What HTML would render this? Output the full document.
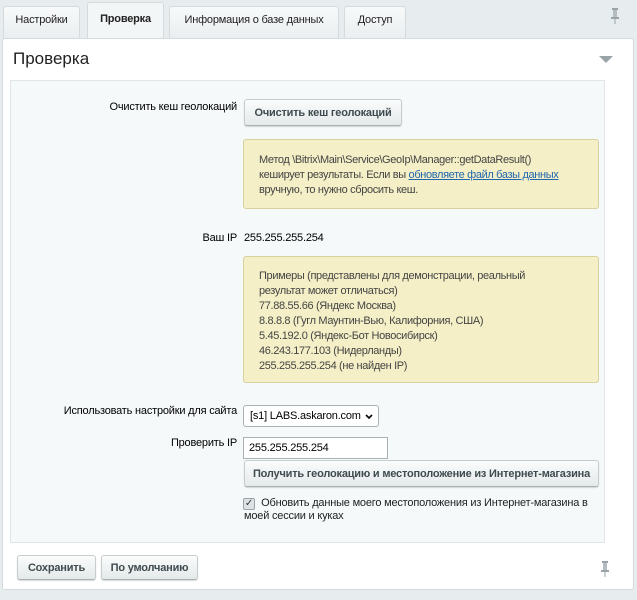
<!DOCTYPE html>
<html><head><meta charset="utf-8"><style>
*{margin:0;padding:0;box-sizing:border-box}
body{width:637px;height:600px;background:#e7ecee;font-family:"Liberation Sans",Arial,sans-serif;font-size:11px;color:#000;position:relative;overflow:hidden;letter-spacing:-0.2px}
.a{position:absolute;white-space:nowrap}
.tab{position:absolute;top:6px;height:33px;background:linear-gradient(#f8fafa,#e9eef0);border:1px solid #d5dbdd;border-bottom:none;border-radius:3px 3px 0 0;font-size:11px;color:#222;text-align:center;line-height:26px}
.btn{position:absolute;background:linear-gradient(#fbfcfc,#e4e9ea);border:1px solid #c6cdcf;border-bottom-color:#a9b1b3;border-radius:3px;font-weight:bold;color:#3f4b4e;text-align:center;box-shadow:0 1px 1px rgba(0,0,0,.15);font-size:11px}
.note{position:absolute;background:#f4efc6;border:1px solid #d8d09d;border-radius:3px;color:#444;line-height:15px;font-size:11px;padding:12px 0 0 15px;letter-spacing:-0.35px}
</style></head><body>
<div class="tab" style="left:3px;width:77px">Настройки</div>
<div class="tab" style="left:87px;width:77px;top:2px;height:38px;background:#f3f6f7;font-weight:bold;line-height:32px">Проверка</div>
<div class="tab" style="left:169px;width:170px">Информация о базе данных</div>
<div class="tab" style="left:344px;width:62px">Доступ</div>
<svg class="a" style="left:611px;top:8px" width="8" height="16" viewBox="0 0 8 16"><rect x="1" y="0" width="6" height="2" fill="#9aa3a8"/><rect x="2" y="2" width="4" height="7" fill="#b4bcc0"/><rect x="0" y="9" width="8" height="2" fill="#9aa3a8"/><rect x="3.5" y="11" width="1" height="5" fill="#9aa3a8"/></svg>
<div class="a" style="left:2px;top:38px;width:632px;height:552px;background:#fff;border:1px solid #d5dbdd;border-radius:3px"></div>
<div class="a" style="left:13px;top:49px;font-size:17px;color:#222;letter-spacing:0">Проверка</div>
<div class="a" style="left:599px;top:56px;width:0;height:0;border-left:7px solid transparent;border-right:7px solid transparent;border-top:7px solid #9aa4a7"></div>
<div class="a" style="left:10px;top:80px;width:595px;height:463px;background:#f5f9f9;border:1px solid #e0e6e8"></div>
<div class="a" style="right:400px;top:101px">Очистить кеш геолокаций</div>
<div class="btn" style="left:244px;top:99px;width:158px;height:27px;line-height:26px">Очистить кеш геолокаций</div>
<div class="note" style="left:243px;top:139px;width:356px;height:70px;padding-top:13px">Метод \Bitrix\Main\Service\GeoIp\Manager::getDataResult()<br>кеширует результаты. Если вы <span style="color:#2067b0;text-decoration:underline">обновляете файл базы данных</span><br>вручную, то нужно сбросить кеш.</div>
<div class="a" style="right:400px;top:232px">Ваш IP</div>
<div class="a" style="left:244px;top:232px">255.255.255.254</div>
<div class="note" style="left:243px;top:256px;width:356px;height:127px">Примеры (представлены для демонстрации, реальный<br>результат может отличаться)<br>77.88.55.66 (Яндекс Москва)<br>8.8.8.8 (Гугл Маунтин-Вью, Калифорния, США)<br>5.45.192.0 (Яндекс-Бот Новосибирск)<br>46.243.177.103 (Нидерланды)<br>255.255.255.254 (не найден IP)</div>
<div class="a" style="right:400px;top:405px">Использовать настройки для сайта</div>
<div class="a" style="left:243px;top:405px;width:136px;height:22px;background:#fff;border:1px solid #a9b1b3;border-radius:3px;line-height:20px;padding-left:6px;font-size:11px">[s1] LABS.askaron.com <svg style="position:absolute;right:5px;top:8px" width="8" height="6" viewBox="0 0 8 6"><path d="M1 1L4 4L7 1" stroke="#000" stroke-width="1.6" fill="none"/></svg></div>
<div class="a" style="right:400px;top:437px">Проверить IP</div>
<div class="a" style="left:243px;top:437px;width:145px;height:22px;background:#fff;border:1px solid #a9b1b3;line-height:20px;padding-left:5px">255.255.255.254</div>
<div class="btn" style="left:244px;top:460px;width:355px;height:27px;line-height:26px">Получить геолокацию и местоположение из Интернет-магазина</div>
<div class="a" style="left:243px;top:498px;width:12px;height:12px;background:#dde3e5;border:1px solid #9aa3a6;border-radius:2px;font-size:10px;line-height:10px;text-align:center;color:#333">✓</div>
<div class="a" style="left:244px;top:497px;line-height:13px;white-space:normal;width:360px;color:#222">&nbsp;&nbsp;&nbsp;&nbsp;&nbsp;&nbsp;Обновить данные моего местоположения из Интернет-магазина в<br>моей сессии и куках</div>
<div class="btn" style="left:17px;top:555px;width:79px;height:25px;line-height:24px">Сохранить</div>
<div class="btn" style="left:101px;top:555px;width:97px;height:25px;line-height:24px">По умолчанию</div>
<svg class="a" style="left:601px;top:561px" width="8" height="16" viewBox="0 0 8 16"><rect x="1" y="0" width="6" height="2" fill="#9aa3a8"/><rect x="2" y="2" width="4" height="7" fill="#b4bcc0"/><rect x="0" y="9" width="8" height="2" fill="#9aa3a8"/><rect x="3.5" y="11" width="1" height="5" fill="#9aa3a8"/></svg>
</body></html>
